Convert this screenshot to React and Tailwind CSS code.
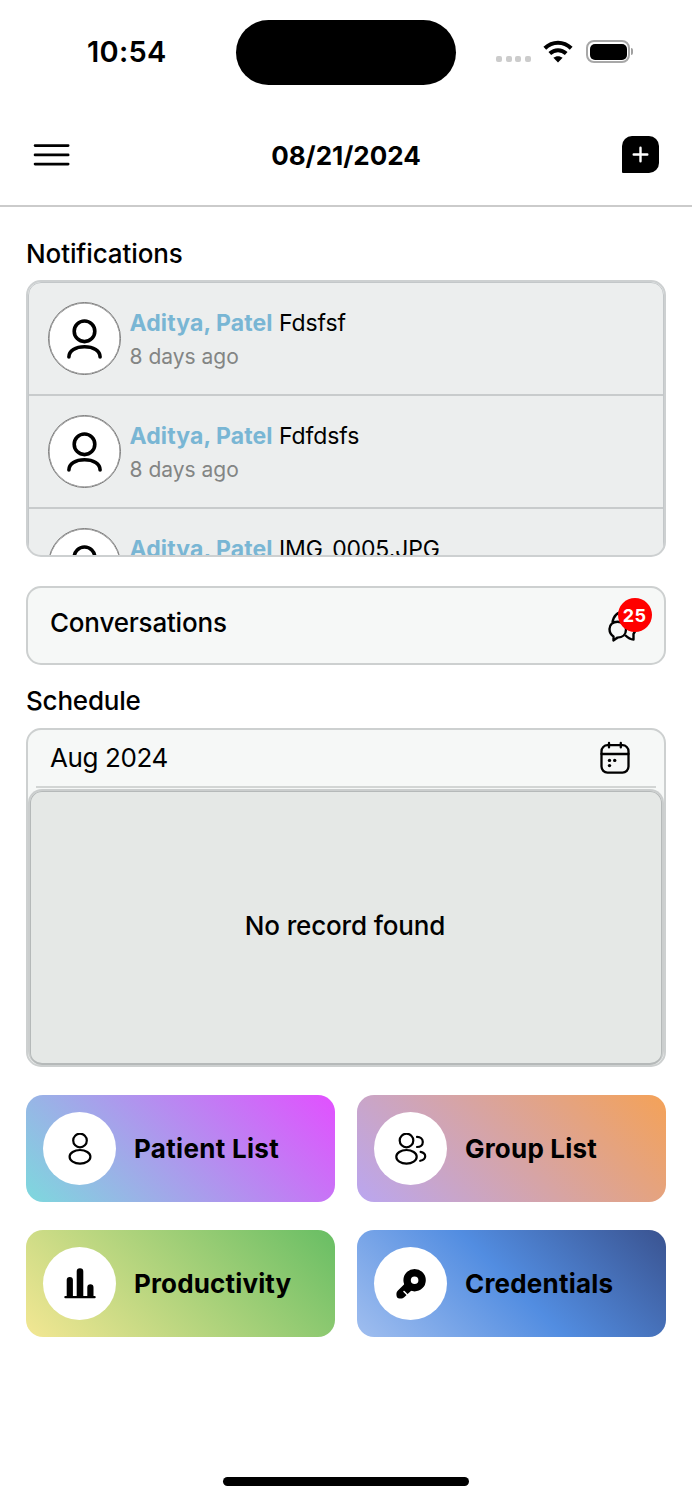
const Avatar = () => (
  <div className="flex h-[73px] w-[73px] shrink-0 items-center justify-center rounded-full border border-[#7b7b7b] bg-white shadow-[inset_0_0_0_0.5px_#7b7b7b]">
    <svg width="36" height="40" viewBox="0 0 36 40" fill="none" stroke="black" strokeWidth="3.6" strokeLinecap="round">
      <circle cx="18.5" cy="12.3" r="10.3" />
      <path d="M2.900 38C2.900 31.500 9.700 27.800 18.500 27.800S34.100 31.500 34.100 38" />
    </svg>
  </div>
);

const MenuIcon = () => (
  <svg width="37" height="22" viewBox="0 0 37 22" stroke="black" strokeWidth="2.6" strokeLinecap="round">
    <path d="M2 1.600H35.200M2 10.900H35.200M2 20.100H35.200" />
  </svg>
);

const PersonIcon = () => (
  <svg width="32" height="32" viewBox="0 0 32 32" fill="none" stroke="black" strokeWidth="2.2">
    <circle cx="16" cy="7.5" r="6.8" />
    <ellipse cx="16" cy="23.8" rx="10.4" ry="6.8" />
  </svg>
);

const GroupIcon = () => (
  <svg width="32" height="32" viewBox="0 0 32 32" fill="none" stroke="black" strokeWidth="2.2" strokeLinecap="round">
    <circle cx="11.5" cy="7.5" r="6.8" />
    <ellipse cx="11.5" cy="23.8" rx="10.2" ry="6.8" />
    <path d="M22 3.900C25.500 3.900 27.800 5.900 27.800 8.900S25.500 14 22 14" />
    <path d="M25.600 18.900C28.400 19.500 30.200 21 30.200 23.200S28.400 27.100 25.200 27.800" />
  </svg>
);

const ChartIcon = () => (
  <svg width="32" height="32" viewBox="0 0 32 32" fill="black">
    <rect x="0.3" y="28" width="31.4" height="2.3" rx="1.1" />
    <path d="M2.7 29V12a3 3 0 0 1 6.2 0v17zM12.7 29V3.6a3.3 3.3 0 0 1 6.6 0V29zM23.300 29v-9.600a3 3 0 0 1 6.200 0V29z" />
  </svg>
);

const KeyIcon = () => (
  <svg width="32" height="32" viewBox="0 0 32 32">
    <circle cx="19.600" cy="12.200" r="7.500" fill="none" stroke="black" strokeWidth="7.400" />
    <path d="M10 15.500L2.700 22.800C1.500 24 1.300 25.600 1.500 27.400C1.700 29.300 2.700 30.300 4.500 30.500C6.700 30.700 8.200 30.300 9.200 29.200L17.500 21.500Z" fill="black" />
    <path d="M9 23.500L13.500 28" stroke="white" strokeWidth="1.600" strokeLinecap="round" />
  </svg>
);

const WifiIcon = () => (
  <svg width="30" height="23" viewBox="0 0 30 23" fill="none" stroke="black" strokeWidth="4">
    <path d="M1.800 8.300C9.500 1 20.500 1 28.200 8.300" />
    <path d="M6.800 13.600C11.700 9.200 18.300 9.200 23.200 13.600" />
    <path d="M15 22.400L10.400 17.800C13 15.600 17 15.600 19.600 17.800Z" fill="black" stroke="none" />
  </svg>
);

const ChatIcon = () => (
  <svg width="30" height="32" viewBox="0 0 30 32" fill="none" stroke="black" strokeWidth="2.400" strokeLinejoin="round">
    <path d="M4.500 12.500C5.500 6 9.500 2 16 2C24 2 28.500 8 28.500 15C28.500 19 27 22 25.500 24V29.500C22.500 29.500 20 28 17 25" />
    <path d="M5.500 30.500V26.500C3 24.800 1.500 22 1.500 19C1.500 14.300 5 11.800 9.500 11.800C14.500 11.800 18 15 18 19.500C18 24.500 14.500 27.600 9.500 27.600C8 28.500 7 29.800 5.500 30.500Z" />
  </svg>
);

const CalendarIcon = () => (
  <svg width="30" height="34" viewBox="0 0 30 34" fill="none" stroke="black" strokeWidth="2.300" strokeLinecap="round">
    <rect x="1.500" y="4.200" width="27" height="27.400" rx="6" />
    <path d="M1.500 13H28.500M9 2V6.400M20.800 2V6.400" />
    <g fill="black" stroke="none">
      <circle cx="9.500" cy="19.400" r="1.700" />
      <circle cx="14.700" cy="19.400" r="1.700" />
      <circle cx="9.500" cy="24.600" r="1.700" />
    </g>
  </svg>
);

const notifications = [
  { name: "Aditya, Patel", text: "Fdsfsf", time: "8 days ago" },
  { name: "Aditya, Patel", text: "Fdfdsfs", time: "8 days ago" },
  { name: "Aditya, Patel", text: "IMG_0005.JPG" },
];

const tiles = [
  { label: "Patient List", icon: PersonIcon, bg: "bg-[linear-gradient(45deg,#7dd9dd,#e250ff)]", tracking: "tracking-[0.3px]" },
  { label: "Group List", icon: GroupIcon, bg: "bg-[linear-gradient(45deg,#baa6f0,#f4a258)]", tracking: "tracking-[0.2px]" },
  { label: "Productivity", icon: ChartIcon, bg: "bg-[linear-gradient(45deg,#f3e793,#68be64)]", tracking: "tracking-[0.15px]" },
  { label: "Credentials", icon: KeyIcon, bg: "bg-[linear-gradient(45deg,#a0beef,#528de1_50%,#3a5390)]", tracking: "tracking-[0.2px]" },
];

const StatusBar = () => (
  <div className="flex h-[104px] items-start pl-[87px] pt-5">
    <span className="w-[149px] pt-3.5 text-[29px] font-semibold leading-9 tracking-[0.3px]">10:54</span>
    <div className="h-[65px] w-[220px] shrink-0 rounded-full bg-black" />
    <div className="ml-10 flex w-[139px] pt-5">
      <div className="mt-[16px] flex w-[47px] gap-[3.500px]">
        <i className="h-1.5 w-1.5 rounded-[2px] bg-[#cccccc]" />
        <i className="h-1.5 w-1.5 rounded-[2px] bg-[#cccccc]" />
        <i className="h-1.5 w-1.5 rounded-[2px] bg-[#cccccc]" />
        <i className="h-1.5 w-1.5 rounded-[2px] bg-[#cccccc]" />
      </div>
      <WifiIcon />
      <div className="ml-[13px] flex h-[23px] w-[44px] shrink-0 rounded-[8px] border-2 border-[#a8a8a8] p-[1.500px]">
        <div className="w-full rounded-[5px] bg-black" />
      </div>
      <div className="ml-px mt-2 h-[7px] w-[2px] shrink-0 rounded-r-full bg-[#a0a0a0]" />
    </div>
  </div>
);

const App = () => {
  return (
    <div className="flex h-[1500px] w-[692px] flex-col overflow-hidden bg-white font-[Inter,sans-serif] text-black">
      <StatusBar />
      <header className="flex h-[103px] items-center justify-between border-b-2 border-[#cbcbcb] px-[33px]">
        <MenuIcon />
        <h1 className="pt-[3px] text-[26px] font-bold leading-8">08/21/2024</h1>
        <div className="flex h-[37px] w-[37px] items-center justify-center rounded-[10px] rounded-bl-[1px] bg-black">
          <svg width="17" height="17" viewBox="0 0 17 17" stroke="white" strokeWidth="2.400" strokeLinecap="round">
            <path d="M8.500 1.700V15.300M1.700 8.500H15.300" />
          </svg>
        </div>
      </header>

      <main className="flex flex-col px-[26px]">
        <h2 className="mt-[31px] text-[26px] font-medium leading-8 tracking-[-0.1px]">Notifications</h2>
        <div className="mt-[10px] h-[277px] overflow-hidden rounded-[15px] border-2 border-[#cdd0d1] bg-[#eceeee]">
          <div className="h-[290px] rounded-[13px] border border-[#c3c7c9]">
            {notifications.map((n) => (
              <div key={n.text} className="flex h-[113px] items-start border-b-2 border-[#c8cbcc] pl-[18.500px] pt-[19px]">
                <Avatar />
                <div className="ml-[9px] pt-[5px] whitespace-nowrap">
                  <p className="text-[23px] leading-8 tracking-[-0.1px]">
                    <span className="font-bold tracking-[0.1px] text-[#79b6d4]">Aditya, Patel</span> {n.text}
                  </p>
                  {n.time && <p className="pt-[2px] text-[21px] leading-8 text-[#838584]">{n.time}</p>}
                </div>
              </div>
            ))}
          </div>
        </div>

        <div className="mt-[29px] flex h-[79px] items-center justify-between rounded-[15px] border-2 border-[#cdd0d0] bg-[#f6f8f7] pl-[22px] pr-[26px]">
          <span className="pb-1.5 text-[26px] font-medium leading-8 tracking-[-0.2px]">Conversations</span>
          <div className="relative pt-px">
            <ChatIcon />
            <span className="absolute -top-[11px] left-[9.500px] flex h-[34px] w-[34px] items-center justify-center rounded-full bg-[#ff0000] pt-px text-[18px] font-bold tracking-[0.3px] text-white">25</span>
          </div>
        </div>

        <h2 className="mt-5 text-[26px] font-medium leading-8 tracking-[-0.2px]">Schedule</h2>
        <div className="mt-[11px] flex h-[339px] flex-col rounded-[15px] border-2 border-[#cdd0d0] bg-[#f6f8f7]">
          <div className="mx-2 flex h-[58px] shrink-0 items-center justify-between border-b-2 border-[#d2d5d4] pl-[14px] pr-[26px]">
            <span className="text-[26px] leading-8 tracking-[-0.4px]">Aug 2024</span>
            <CalendarIcon />
          </div>
          <div className="mt-px flex flex-1 rounded-[14px] border-2 border-b-0 border-[#cbcece]">
            <div className="flex flex-1 items-center justify-center rounded-[12px] border border-b-2 border-[#b5b9b9] bg-[#e5e8e6]">
              <span className="pb-1 pr-0.5 text-[26px] font-medium leading-8 tracking-[-0.150px]">No record found</span>
            </div>
          </div>
        </div>

        <div className="mt-[28px] grid grid-cols-2 gap-x-[22px] gap-y-[28px]">
          {tiles.map(({ label, icon: Icon, bg, tracking }) => (
            <div key={label} className={`flex h-[107px] items-center rounded-[17px] pl-[17px] ${bg}`}>
              <div className="flex h-[73px] w-[73px] items-center justify-center rounded-full bg-white">
                <Icon />
              </div>
              <span className={`ml-[18px] text-[26px] font-bold leading-8 ${tracking}`}>{label}</span>
            </div>
          ))}
        </div>
      </main>

      <div className="mx-auto mb-[14px] mt-auto h-[9px] w-[246px] rounded-full bg-black" />
    </div>
  );
};

export default App;
